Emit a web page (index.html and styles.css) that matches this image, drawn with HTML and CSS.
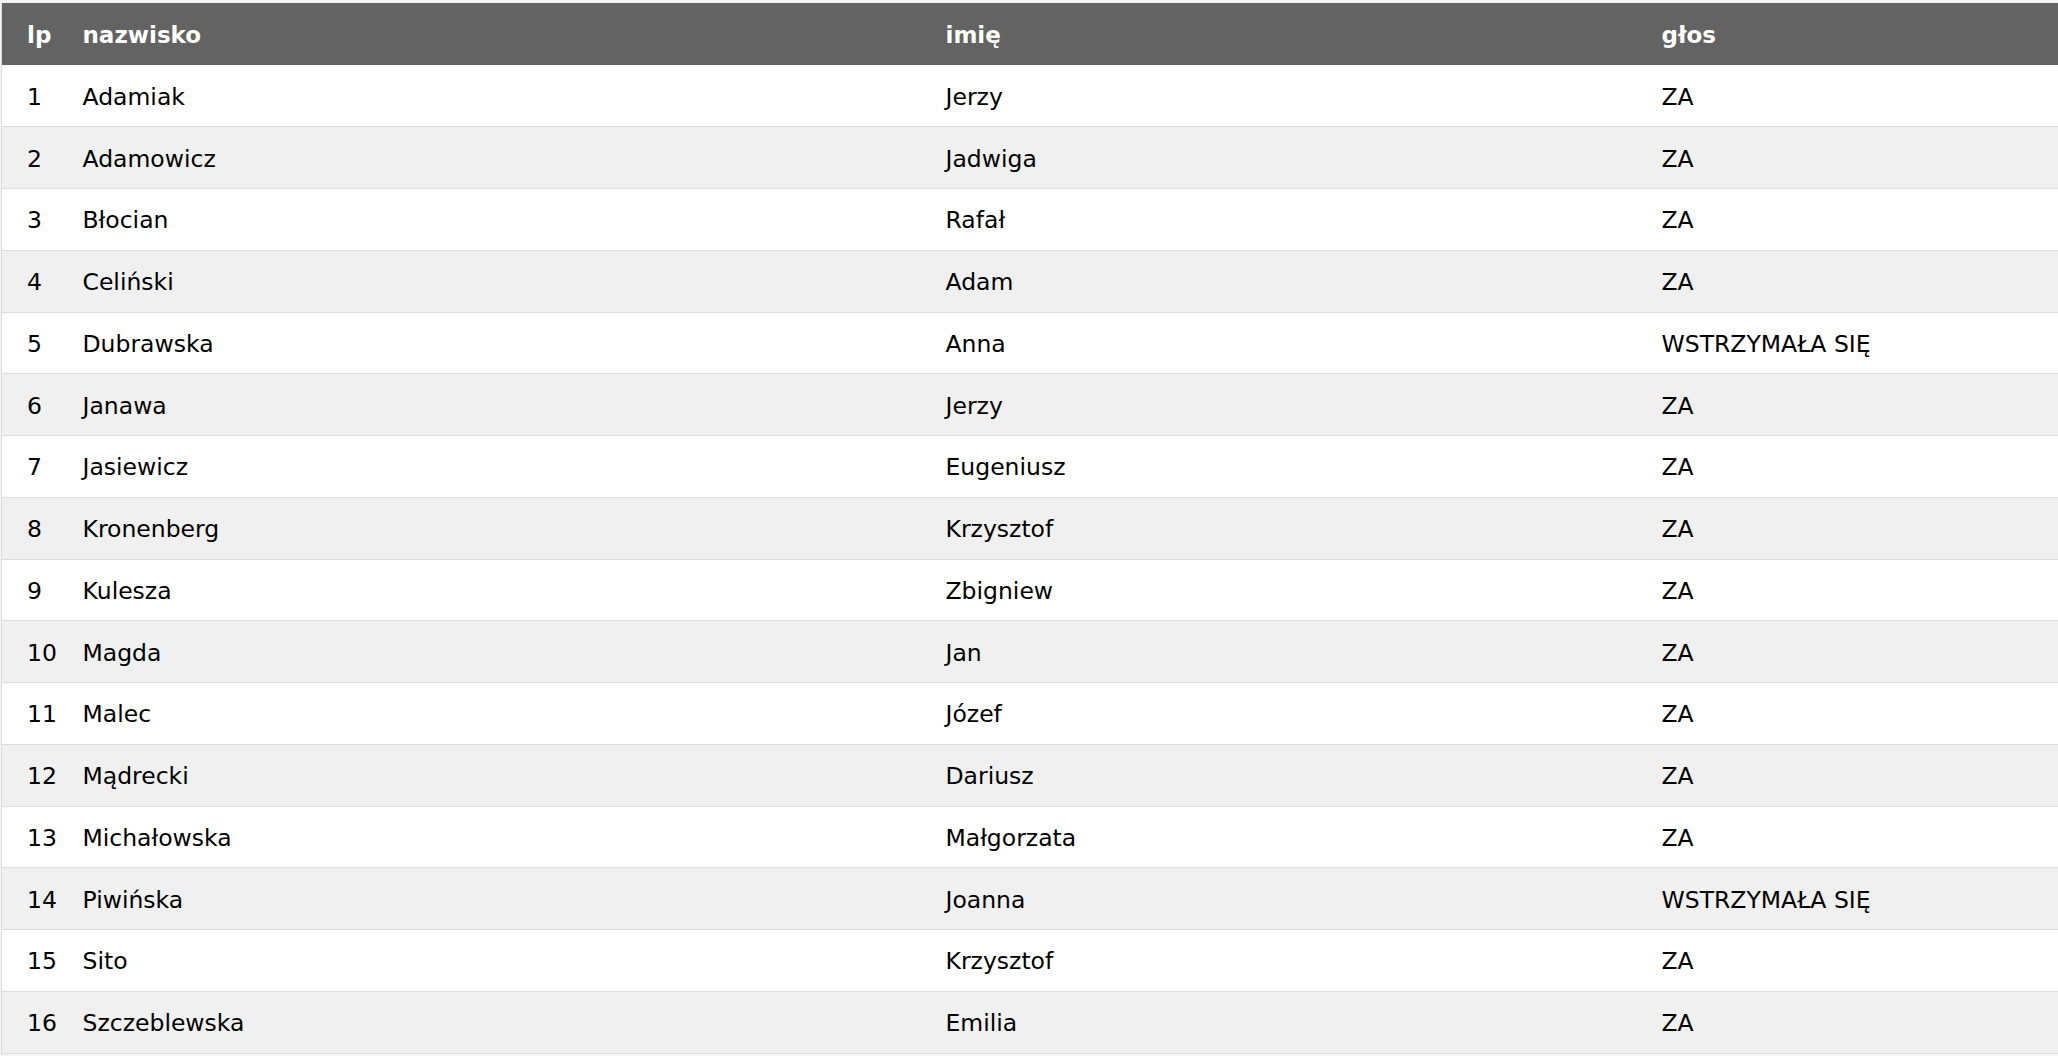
FILE: index.html
```html
<!DOCTYPE html>
<html lang="pl">
<head>
<meta charset="utf-8">
<title>Głosowanie</title>
<link rel="stylesheet" href="styles.css">
</head>
<body>
<div class="wrap">
<table class="votes">
<colgroup>
<col class="c-lp"><col class="c-name"><col class="c-first"><col class="c-vote">
</colgroup>
<thead>
<tr><th>lp</th><th>nazwisko</th><th>imię</th><th>głos</th></tr>
</thead>
<tbody>
<tr><td>1</td><td>Adamiak</td><td>Jerzy</td><td>ZA</td></tr>
<tr><td>2</td><td>Adamowicz</td><td>Jadwiga</td><td>ZA</td></tr>
<tr><td>3</td><td>Błocian</td><td>Rafał</td><td>ZA</td></tr>
<tr><td>4</td><td>Celiński</td><td>Adam</td><td>ZA</td></tr>
<tr><td>5</td><td>Dubrawska</td><td>Anna</td><td>WSTRZYMAŁA SIĘ</td></tr>
<tr><td>6</td><td>Janawa</td><td>Jerzy</td><td>ZA</td></tr>
<tr><td>7</td><td>Jasiewicz</td><td>Eugeniusz</td><td>ZA</td></tr>
<tr><td>8</td><td>Kronenberg</td><td>Krzysztof</td><td>ZA</td></tr>
<tr><td>9</td><td>Kulesza</td><td>Zbigniew</td><td>ZA</td></tr>
<tr><td>10</td><td>Magda</td><td>Jan</td><td>ZA</td></tr>
<tr><td>11</td><td>Malec</td><td>Józef</td><td>ZA</td></tr>
<tr><td>12</td><td>Mądrecki</td><td>Dariusz</td><td>ZA</td></tr>
<tr><td>13</td><td>Michałowska</td><td>Małgorzata</td><td>ZA</td></tr>
<tr><td>14</td><td>Piwińska</td><td>Joanna</td><td>WSTRZYMAŁA SIĘ</td></tr>
<tr><td>15</td><td>Sito</td><td>Krzysztof</td><td>ZA</td></tr>
<tr><td>16</td><td>Szczeblewska</td><td>Emilia</td><td>ZA</td></tr>
</tbody>
</table>
</div>
</body>
</html>
```
FILE: styles.css
```css
html, body {
  margin: 0;
  padding: 0;
  background: #f4f4f4;
  overflow: hidden;
}
.wrap {
  padding: 3px 0 0 1px;
}
.votes {
  width: 2057px;
  border-collapse: collapse;
  table-layout: fixed;
  font-family: "DejaVu Sans", Verdana, sans-serif;
  font-size: 23.5px;
  color: #000;
  border-left: 1px solid #dcdcdc;
}
.c-lp { width: 55px; }
.c-name { width: 863px; }
.c-first { width: 716px; }
.c-vote { width: auto; }
.votes th {
  background: #636363;
  color: #fff;
  font-size: 23px;
  font-weight: bold;
  text-align: left;
  height: 62px;
  padding: 2px 0 0 26px;
  vertical-align: middle;
  box-sizing: border-box;
}
.votes th:first-child,
.votes td:first-child {
  padding-left: 25px;
}
.votes td {
  height: 61.75px;
  padding: 2px 0 0 26px;
  vertical-align: middle;
  border-bottom: 1px solid #dcdcdc;
  box-sizing: border-box;
  background: #fff;
  white-space: nowrap;
}
.votes tbody tr:nth-child(even) td {
  background: #f0f0f0;
}
```
